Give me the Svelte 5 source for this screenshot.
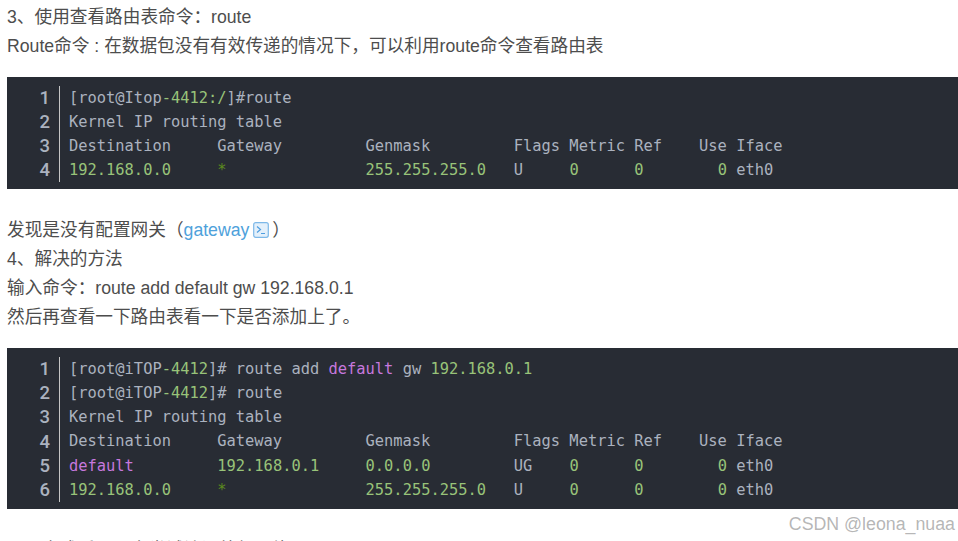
<script>
	const block1 = [
		[['c', '[root@Itop'], ['g', '-4412:/'], ['c', ']#route']],
		[['c', 'Kernel IP routing table']],
		[['c', 'Destination     Gateway         Genmask         Flags Metric Ref    Use Iface']],
		[['g', '192.168.0.0'], ['c', '     '], ['s', '*'], ['c', '               '], ['g', '255.255.255.0'], ['c', '   U     '], ['g', '0'], ['c', '      '], ['g', '0'], ['c', '        '], ['g', '0'], ['c', ' eth0']]
	];

	const block2 = [
		[['c', '[root@iTOP'], ['g', '-4412'], ['c', ']# route add '], ['p', 'default'], ['c', ' gw '], ['g', '192.168.0.1']],
		[['c', '[root@iTOP'], ['g', '-4412'], ['c', ']# route']],
		[['c', 'Kernel IP routing table']],
		[['c', 'Destination     Gateway         Genmask         Flags Metric Ref    Use Iface']],
		[['p', 'default'], ['c', '         '], ['g', '192.168.0.1'], ['c', '     '], ['g', '0.0.0.0'], ['c', '         UG    '], ['g', '0'], ['c', '      '], ['g', '0'], ['c', '        '], ['g', '0'], ['c', ' eth0']],
		[['g', '192.168.0.0'], ['c', '     '], ['s', '*'], ['c', '               '], ['g', '255.255.255.0'], ['c', '   U     '], ['g', '0'], ['c', '      '], ['g', '0'], ['c', '        '], ['g', '0'], ['c', ' eth0']]
	];
</script>

{#snippet code(lines)}
	<div class="code">
		<ul class="nums">
			{#each lines as _, i}
				<li>{i + 1}</li>
			{/each}
		</ul>
		<pre>{#each lines as line}<div class="ln">{#each line as [cls, text]}<span class={cls}>{text}</span>{/each}</div>{/each}</pre>
	</div>
{/snippet}

<main>
	<p>3、使用查看路由表命令：route</p>
	<p>Route命令 : 在数据包没有有效传递的情况下，可以利用route命令查看路由表</p>

	{@render code(block1)}

	<p>
		发现是没有配置网关（<a href="#gateway">gateway<svg class="ico" viewBox="0 0 16 16" width="16" height="16">
			<rect x="0.7" y="0.7" width="14.6" height="14.6" rx="2" fill="#e3f0fb" stroke="#7db8e8" stroke-width="1.2" />
			<path d="M4 4.5 7.5 7.5 4 10.5M8 11.5h4" fill="none" stroke="#4f9ee0" stroke-width="1.2" />
		</svg></a>）
	</p>
	<p>4、解决的方法</p>
	<p>输入命令：route add default gw 192.168.0.1</p>
	<p>然后再查看一下路由表看一下是否添加上了。</p>

	{@render code(block2)}

	<p>配置完成后，再次尝试访问外部网络</p>

	<div class="mark">CSDN @leona_nuaa</div>
</main>

<style>
	:global(body) {
		margin: 0;
		background: #fff;
		overflow: hidden;
	}

	main {
		position: relative;
		height: 541px;
		overflow: hidden;
		box-sizing: border-box;
		padding: 3px 0 0 7px;
		font-family: "Liberation Sans", "Noto Sans CJK SC", sans-serif;
		font-size: 17.66px;
		line-height: 28.9px;
		color: #4d4d4d;
	}

	p {
		margin: 0;
	}

	a {
		color: #4ea1db;
		text-decoration: none;
	}

	.ico {
		vertical-align: -2px;
		margin: 0 3px 0 4px;
	}

	.code {
		display: flex;
		background: #282c34;
		margin: 16px 0 27px;
		padding: 9px 0 7px;
		width: 951px;
	}

	.nums {
		list-style: none;
		margin: 0;
		padding: 0 9px 0 0;
		width: 43px;
		border-right: 1px solid #c5c5c5;
		font-family: Roboto, "Liberation Sans", sans-serif;
		font-weight: 500;
		font-size: 18.5px;
		line-height: 24.15px;
		text-align: right;
		color: #abb2bf;
	}

	pre {
		margin: 0 0 0 9px;
		font-family: "DejaVu Sans Mono", monospace;
		font-size: 15.4px;
		line-height: 24.15px;
		color: #abb2bf;
	}

	.ln {
		height: 24.15px;
	}

	.g {
		color: #98c379;
	}

	.p {
		color: #c678dd;
	}

	.s {
		color: #5c8a1e;
	}

	.mark {
		position: absolute;
		right: 3px;
		top: 512px;
		font-size: 17.78px;
		line-height: 24px;
		color: rgba(120, 120, 120, 0.55);
	}
</style>
